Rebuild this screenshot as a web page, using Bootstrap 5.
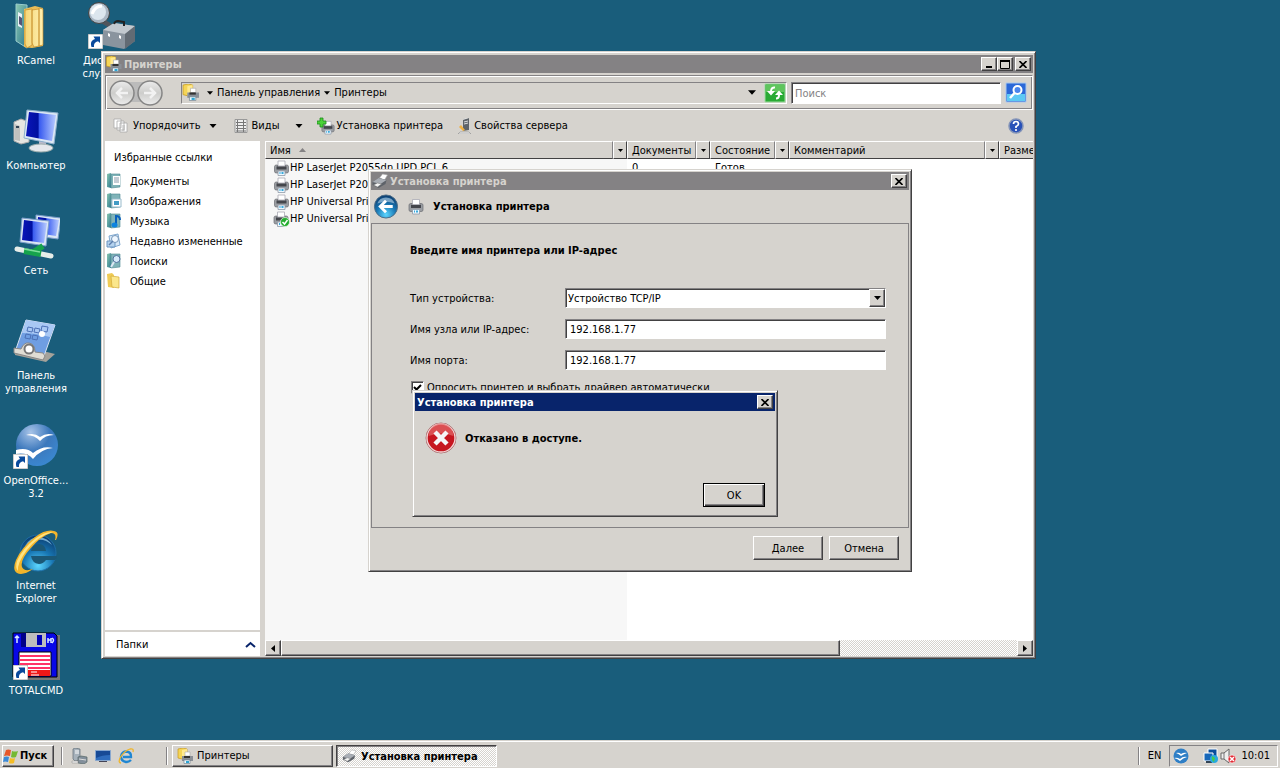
<!DOCTYPE html>
<html lang="ru">
<head>
    <meta charset="UTF-8">
    <meta name="viewport" content="width=device-width, initial-scale=1.0">
    <title>Установка принтера</title>
    <link href="https://cdn.jsdelivr.net/npm/bootstrap@5.3.0/dist/css/bootstrap.min.css" rel="stylesheet">
    <style>
        :root {
            --face: #d6d3ce;
            --shade: #848284;
            --dark: #424142;
        }
        body {
            background-color: #195d7b;
            color: #000;
            font-family: "DejaVu Sans Condensed", "DejaVu Sans", sans-serif;
            font-size: 11px;
            line-height: 13px;
        }
        svg {
            display: block;
            flex: none;
        }
        button, input, select {
            color: #000;
        }
        .face {
            background-color: var(--face);
        }

        /* desktop shortcuts */
        .shortcuts {
            align-content: flex-start;
            column-gap: 3px;
            min-height: 0;
        }
        .shortcut {
            width: 72px;
            height: 105px;
            color: #fff;
            text-decoration: none;
            white-space: nowrap;
            padding-top: 2px;
        }
        .shortcut svg {
            margin-bottom: 4px;
        }

        /* 3d edges */
        .raised {
            background-color: var(--face);
            border: 1px solid;
            border-color: #fff var(--dark) var(--dark) #fff;
            box-shadow: inset -1px -1px 0 var(--shade);
            border-radius: 0;
            padding: 0;
        }
        .sunken {
            background-color: #fff;
            border: 1px solid;
            border-color: var(--shade) #fff #fff var(--shade);
            box-shadow: inset 1px 1px 0 var(--dark);
        }
        .pane {
            background-color: var(--face);
            border: 1px solid;
            border-color: var(--face) var(--dark) var(--dark) var(--face);
            box-shadow: inset 1px 1px 0 #fff, inset -1px -1px 0 var(--shade);
        }
        .hatch {
            background: repeating-conic-gradient(#fff 0 25%, var(--face) 0 50%) 0 0 / 2px 2px;
        }

        .titlebar {
            background-color: var(--shade);
            color: var(--face);
            font-weight: bold;
            height: 18px;
            padding-right: 2px;
            gap: 2px;
        }
        .titlebar-active {
            background-color: #08246b;
            color: #fff;
            padding-left: 2px;
        }
        .sysbtn {
            width: 16px;
            height: 14px;
        }

        /* explorer */
        .explorer {
            left: 101px;
            top: 51px;
            right: 244px;
            bottom: 109px;
            padding: 3px 2px 2px 3px;
        }
        .navframe {
            height: 35px;
            border: 1px solid;
            border-color: var(--shade) #fff #fff var(--shade);
            box-shadow: inset 1px 1px 0 #fff, inset -1px -1px 0 var(--shade);
            padding: 0 5px 0 3px;
            margin-top: 2px;
        }
        .address {
            height: 22px;
            border: 1px solid;
            border-color: var(--shade) #fff #fff var(--shade);
            margin-left: 17px;
        }
        .address a {
            color: #000;
            text-decoration: none;
        }
        .plain {
            background: none;
            border: 0;
            padding: 0;
        }
        .search {
            width: 210px;
            height: 22px;
            padding: 2px 3px 0;
            border-radius: 0;
        }
        .search::placeholder {
            color: var(--shade);
        }
        .toolbar {
            height: 31px;
            padding: 0 9px 0 8px;
            gap: 14px;
        }
        .sidebar {
            width: 155px;
            background-color: #fff;
        }
        .sidebar h2 {
            font-size: 11px;
            line-height: 13px;
            font-weight: normal;
            margin: 10px 0 7px 9px;
        }
        .sidebar a {
            color: #000;
            text-decoration: none;
            height: 20px;
            gap: 8px;
            padding-left: 1px;
        }
        .folders {
            border-top: 2px solid var(--face);
            height: 26px;
            padding: 0 4px 0 11px;
        }
        .filelist {
            margin-left: 5px;
            background: linear-gradient(90deg, #f7f7f7 362px, #fff 362px);
        }
        .filelist table {
            width: 100%;
            table-layout: fixed;
            white-space: nowrap;
        }
        .filelist th {
            font-weight: normal;
            padding: 0;
            background-color: var(--face);
        }
        .filelist td {
            height: 17px;
            padding: 0 0 0 5px;
        }
        .filelist td:first-child {
            padding-left: 8px;
        }
        .headcell {
            height: 18px;
            border: 1px solid;
            border-color: #fff var(--shade) var(--dark) #fff;
            padding-left: 4px;
            overflow: hidden;
        }
        .headdrop {
            width: 14px;
            height: 18px;
            border: 1px solid;
            border-color: #fff var(--dark) var(--dark) #fff;
        }
        .scroll {
            height: 16px;
        }
        .scroll .raised {
            height: 16px;
        }
        .scroll .arrow {
            width: 16px;
        }
        .thumb {
            width: 76%;
        }

        /* wizard */
        .wizard {
            left: 368px;
            top: 169px;
            width: 544px;
            padding: 2px 2px 11px 2px;
        }
        .wizard-head {
            padding: 4px 2px;
            gap: 9px;
        }
        .wizard-body {
            border: 1px solid var(--shade);
            padding: 20px 22px 0 38px;
            height: 305px;
        }
        .wizard h1 {
            font-size: 11px;
            line-height: 13px;
            font-weight: bold;
            margin-bottom: 31px;
        }
        .field {
            height: 20px;
            margin-bottom: 11px;
        }
        .field label {
            width: 155px;
        }
        .field input {
            padding: 0 4px;
            border-radius: 0;
        }
        .field select {
            appearance: none;
            border: 0;
            background: none;
            padding: 0 2px;
        }
        .pollrow {
            gap: 3px;
            padding-left: 1px;
            line-height: 10px;
        }
        .tick {
            appearance: none;
            width: 13px;
            height: 13px;
            margin: 0;
        }
        .tick:checked {
            background: #fff url("data:image/svg+xml,%3Csvg xmlns='http://www.w3.org/2000/svg' viewBox='0 0 11 11'%3E%3Cpath d='M2 5l2.500 2.500L9 3' fill='none' stroke='%23000' stroke-width='2'/%3E%3C/svg%3E") center / 11px 11px no-repeat;
        }
        .wizard-foot {
            gap: 6px;
            padding: 8px 10px 0 0;
        }
        .pushbtn {
            width: 70px;
            height: 24px;
        }

        /* message box */
        .msgbox {
            left: 412px;
            top: 390px;
            width: 366px;
            height: 127px;
            padding: 2px 2px 9px;
        }
        .msg-text {
            padding: 11px 10px;
        }
        .ok-row {
            padding-right: 10px;
        }
        .okbtn {
            width: 62px;
            height: 24px;
            border: 1px solid #000;
            box-shadow: inset 1px 1px 0 #fff, inset -1px -1px 0 var(--dark), inset -2px -2px 0 var(--shade);
        }

        /* taskbar */
        .taskbar {
            height: 28px;
            border-top: 1px solid var(--face);
            box-shadow: inset 0 1px 0 #fff;
            padding: 3px 2px 1px;
        }
        .start-btn {
            width: 52px;
            height: 22px;
            margin-right: 7px;
        }
        .quick {
            gap: 7px;
            padding: 0 32px 0 8px;
        }
        .tasks {
            gap: 3px;
            padding-left: 4px;
        }
        .taskbtn {
            width: 161px;
            height: 22px;
        }
        .grip {
            width: 2px;
            height: 18px;
            border-left: 1px solid var(--shade);
            border-right: 1px solid #fff;
        }
        .pressed {
            border: 1px solid;
            border-color: var(--dark) #fff #fff var(--dark);
            box-shadow: inset 1px 1px 0 var(--shade);
            padding: 1px 0 0;
        }
        .tray {
            height: 22px;
            border: 1px solid;
            border-color: var(--shade) #fff #fff var(--shade);
            padding: 0 7px 0 2px;
        }
    </style>
</head>
<body class="vh-100 overflow-hidden d-flex flex-column position-relative">

    <!-- shared icons -->
    <svg width="0" height="0" class="position-absolute">
        <defs>
            <linearGradient id="gScreen" x1="0" y1="0" x2="1" y2="0">
                <stop offset="0" stop-color="#0a14b8"/><stop offset=".4" stop-color="#0010a0"/><stop offset=".45" stop-color="#3a5cf0"/><stop offset="1" stop-color="#b8ccff"/>
            </linearGradient>
            <radialGradient id="gBlue" cx=".5" cy=".85" r=".85">
                <stop offset="0" stop-color="#5cd6ff"/><stop offset=".5" stop-color="#1877b4"/><stop offset="1" stop-color="#0b3a6c"/>
            </radialGradient>
            <radialGradient id="gOffice" cx=".35" cy=".2" r=".9">
                <stop offset="0" stop-color="#a8c4e8"/><stop offset=".5" stop-color="#3c78bc"/><stop offset="1" stop-color="#3a8ad4"/>
            </radialGradient>
            <linearGradient id="gGrey" x1="0" y1="0" x2="0" y2="1">
                <stop offset="0" stop-color="#ececec"/><stop offset=".5" stop-color="#cdcdcb"/><stop offset="1" stop-color="#ececec"/>
            </linearGradient>
            <linearGradient id="gGold" x1="0" y1="0" x2="1" y2="0">
                <stop offset="0" stop-color="#f4d678"/><stop offset="1" stop-color="#fff0b0"/>
            </linearGradient>
            <linearGradient id="gTeal" x1="0" y1="0" x2="1" y2="1">
                <stop offset="0" stop-color="#8cc8b0"/><stop offset="1" stop-color="#2c7890"/>
            </linearGradient>
            <symbol id="shortcutArrow" viewBox="0 0 15 15">
                <path d="M0 0h15v15H0z" fill="#fff" stroke="#999"/>
                <path d="M3.500 13C2 8 4 6 7 5L5.500 2.500H12V9L10 7.200C7 8 5.500 10 6 13z" fill="#0a4a9c"/>
            </symbol>
            <symbol id="printer" viewBox="0 0 16 16">
                <path d="M4.500 1h7v5h-7z" fill="#fff" stroke="#a9aab4" stroke-width=".8"/>
                <path d="M1 6.500Q1 5 3 5h1v2h8V5h1q2 0 2 1.500v5Q15 13 13 13H3q-2 0-2-1.500z" fill="#9a9da2" stroke="#6b6d72" stroke-width=".7"/>
                <path d="M3 6.500h10v3H3z" fill="#44464c"/>
                <path d="M4.500 11h7v4.500h-7z" fill="#eef8ff" stroke="#8f9aa8" stroke-width=".8"/>
                <path d="M6 12h1v2H6zM8 12h2v2H8z" fill="#39a9dc"/>
            </symbol>
            <symbol id="printers" viewBox="0 0 16 16">
                <path d="M1 1l5-1 4 1v9l-5 1-4-1z" fill="#f5d557" stroke="#c79a1e" stroke-width=".7"/>
                <path d="M5 2l5-1v8l-5 2z" fill="#ffe98f"/>
                <path d="M8 4h5v4H8z" fill="#fff" stroke="#aaa" stroke-width=".6"/>
                <path d="M5 8h11v5H5z" fill="#8a8f96"/>
                <path d="M7 8h6v2H7z" fill="#333"/>
                <path d="M7 12h6v3.500H7z" fill="#e9faff" stroke="#678" stroke-width=".6"/>
                <path d="M9 13h3v2H9z" fill="#2ba3d2"/>
            </symbol>
            <symbol id="flatprinter" viewBox="0 0 16 16">
                <path d="M8 5l3-4 5 1-3 5z" fill="#fff" stroke="#aaa" stroke-width=".6"/>
                <path d="M1 9l6-4 8 2-1 4-7 4-6-3z" fill="#5d6269"/>
                <path d="M1 9l6-4 8 2-6 4z" fill="#a9aeb5"/>
                <path d="M2 12l4-2 4 1-4 3z" fill="#f4f4f4" stroke="#777" stroke-width=".5"/>
            </symbol>
            <symbol id="book" viewBox="0 0 16 16">
                <path d="M1 1l4-1v15l-4-1z" fill="url(#gTeal)"/>
                <path d="M5 1h9v13l-9 1z" fill="#7fb3b8" stroke="#4c8790" stroke-width=".6"/>
            </symbol>
            <symbol id="down" viewBox="0 0 7 4"><path d="M0 0h7L3.500 4z" fill="currentColor"/></symbol>
            <symbol id="cross" viewBox="0 0 8 7"><path d="M.5 0l7 7M7.500 0l-7 7" stroke="#000" stroke-width="1.600"/></symbol>
            <symbol id="ie" viewBox="0 0 48 48">
                <circle cx="26" cy="26" r="18" fill="url(#gBlue)" stroke="#1e6ea6"/>
                <path d="M19 24Q20 17 27 17Q33 17 34 24z" fill="#1b5876"/>
                <path d="M19 29H45Q45 31 43 33H34Q31 37 27 37Q20 36 19 29z" fill="#1b5876"/>
                <path d="M13 19Q18 10 27 10Q36 11 40 18Q33 12 26 13Q18 14 13 19z" fill="#9cd4f2" opacity=".7"/>
                <path d="M44 13Q48 5 42 4Q34 2 23 10Q9 21 4 33Q0 43 5 46Q11 49 21 42Q12 45 10 40Q8 33 18 22Q29 9 39 6Q45 6 43 13z" fill="#f3b52a"/>
                <path d="M41 5Q34 4 24 11Q10 22 5 34Q3 41 6 44Q5 36 15 23Q26 9 41 5z" fill="#ffe482"/>
            </symbol>
            <symbol id="iesmall" viewBox="0 0 16 16">
                <path d="M13 12Q11 14 8 14Q3 13 3 8.500Q4 3.500 8.500 3.500Q13.500 4 13 9H5" fill="none" stroke="#1f86d2" stroke-width="2.400"/>
                <path d="M15 4Q16 0 12 1Q6 3 2 10Q0 15 3 15" fill="none" stroke="#f0b62c" stroke-width="1.300"/>
            </symbol>
            <symbol id="office" viewBox="0 0 44 44">
                <circle cx="22" cy="22" r="21" fill="url(#gOffice)"/>
                <path d="M11 12Q19 9 25 14Q32 9 39 12Q30 12 25 18Q20 12 11 12z" fill="#fff"/>
                <path d="M1 27Q12 24 18 30Q28 22 38 25Q26 26 18 36Q12 29 1 31z" fill="#fff"/>
            </symbol>
            <symbol id="officesmall" viewBox="0 0 16 16">
                <circle cx="8" cy="8" r="7.500" fill="#2f7fc6"/>
                <path d="M3 5q3-1 5 1 3-2 6-1-3 1-6 3-2-2-5-3zM1 10q3-1 6 1 3-3 7-2-4 1-7 4-2-2-6-3z" fill="#fff"/>
            </symbol>
        </defs>
    </svg>

    <main class="shortcuts flex-grow-1 d-flex flex-column flex-wrap">
        <a href="#" class="shortcut d-flex flex-column align-items-center text-center">
            <svg width="48" height="48" viewBox="0 0 48 48">
                <path d="M4 2l11 1v43L4 39z" fill="url(#gTeal)" stroke="#9cc"/>
                <path d="M6 10l4 2v14l-4-2z" fill="#e9f2f8"/>
                <path d="M7 14l3 2v8l-3-2z" fill="#557"/>
                <path d="M12 7l11-3 8 2v38l-11 2-8-1z" fill="#e9bd58"/>
                <path d="M13 8l7-1v36l-5 3-2-4zM20 8l7-1v37l-5 1-2-4zM27 6l4 1v36l-4 1z" fill="url(#gGold)" stroke="#c58d28" stroke-width=".7"/>
            </svg>
            <span>RCamel</span>
        </a>
        <a href="#" class="shortcut d-flex flex-column align-items-center text-center">
            <svg width="48" height="48" viewBox="0 0 48 48">
                <path d="M2 15l7-3 8 3v20l-8 2-7-3z" fill="#e6e6e2" stroke="#aaa"/>
                <path d="M3 17l5 2v15l-5-1z" fill="#bfc1bf"/><path d="M4 19h3v2H4z" fill="#345"/>
                <path d="M27 34l7 1 1 7h-8z" fill="#bbc"/>
                <ellipse cx="29" cy="41" rx="12" ry="4" fill="#e5e8ec" stroke="#9aa"/>
                <path d="M15 3l31 3-4 31-30-6z" fill="#dce8f4" stroke="#8fb0cc"/>
                <path d="M17 5l27 3-4 26-26-5z" fill="url(#gScreen)"/>
            </svg>
            <span>Компьютер</span>
        </a>
        <a href="#" class="shortcut d-flex flex-column align-items-center text-center">
            <svg width="48" height="48" viewBox="0 0 48 48">
                <path d="M24 3l25 3-3 21-22-3z" fill="#dbe6f4" stroke="#7b9dca"/>
                <path d="M26 5l21 3-3 16-19-3z" fill="url(#gScreen)"/>
                <path d="M10 6l27 3-3 25-26-4z" fill="#dbe6f4" stroke="#7b9dca"/>
                <path d="M12 8l23 3-3 20-22-3z" fill="url(#gScreen)"/>
                <path d="M5 37l34 7" stroke="#e6ede9" stroke-width="5" stroke-linecap="round"/>
                <path d="M12 39l17 3M20 41l11-7" stroke="#16a34c" stroke-width="6"/>
                <path d="M12 37l16 3" stroke="#7ee09b" stroke-width="1.500"/>
            </svg>
            <span>Сеть</span>
        </a>
        <a href="#" class="shortcut d-flex flex-column align-items-center text-center">
            <svg width="48" height="48" viewBox="0 0 48 48">
                <path d="M3 36l32-1 8 2-9 8-31-7z" fill="#a5a29a"/>
                <path d="M14 3l29 5-11 31-28-7z" fill="#6f9ee2" stroke="#d8e3f2"/>
                <path d="M14 3l29 5-5 12q-15-4-28-4z" fill="#a9c8f4"/>
                <path d="M16 10l5 1-1 4-5-1zM23 11l5 1-1 4-5-1zM30 9l6 1-1 5-6-1zM14 17l5 1-1 4-5-1zM21 18l5 1-1 4-5-1z" fill="none" stroke="#4c70b6"/>
                <circle cx="30" cy="17" r="3" fill="#fff"/>
                <path d="M2 31l7 1q3-7 8-6 6 1 6 9l8 1 2 3-2 4-29-7z" fill="#e0ddd4" stroke="#888"/>
                <circle cx="17" cy="32" r="4.500" fill="#fff" stroke="#777" stroke-width="2"/>
            </svg>
            <span>Панель<br>управления</span>
        </a>
        <a href="#" class="shortcut d-flex flex-column align-items-center text-center">
            <svg width="48" height="48" viewBox="0 0 48 48">
                <use href="#office" x="3" y="1" width="44" height="44"/>
                <use href="#shortcutArrow" x="1" y="32" width="15" height="15"/>
            </svg>
            <span>OpenOffice...<br>3.2</span>
        </a>
        <a href="#" class="shortcut d-flex flex-column align-items-center text-center">
            <svg width="48" height="48" viewBox="0 0 48 48"><use href="#ie"/></svg>
            <span>Internet<br>Explorer</span>
        </a>
        <a href="#" class="shortcut d-flex flex-column align-items-center text-center">
            <svg width="48" height="48" viewBox="0 0 48 48">
                <path d="M5 3h43v45H5z" fill="#777"/>
                <path d="M1 1h41l3 3v41H1z" fill="#0808e8" stroke="#000"/>
                <path d="M14 1h20v14H14z" fill="#bdbdbd"/><path d="M9 1h5v14H9z" fill="#000088"/>
                <path d="M25 3h5v10h-5z" fill="#0000b8"/>
                <path d="M5 4v7M3 6l2-2 2 2M36 6v5M39 6v5M36 8h3M40 6q3 2 0 5" stroke="#d8e8ff" stroke-width="1.500" fill="none"/>
                <path d="M7 20h32v24H7z" fill="#fff" stroke="#000"/>
                <path d="M8 24h30M8 28h30M8 32h30M8 36h30" stroke="#f36" stroke-width="2"/>
                <path d="M8 38h30v6H8z" fill="#f01818"/><path d="M19 40h6M19 43h8" stroke="#fff"/>
                <use href="#shortcutArrow" x="1" y="33" width="15" height="15"/>
            </svg>
            <span>TOTALCMD</span>
        </a>
        <a href="#" class="shortcut d-flex flex-column align-items-center text-center">
            <svg width="48" height="48" viewBox="0 0 48 48">
                <path d="M14 15l14 9-2 4-14-8z" fill="#50555c"/>
                <circle cx="12" cy="11" r="10.500" fill="#aab6c3" stroke="#444"/>
                <circle cx="11" cy="10" r="8" fill="#dce6ee"/>
                <path d="M5 12q3-8 10-8" stroke="#fff" stroke-width="3" fill="none"/>
                <path d="M16 28l11-7 21 3v15l-11 8-21-4z" fill="#8a949e"/>
                <path d="M16 28l11-7 21 3-10 8z" fill="#c2c9cf"/>
                <path d="M38 32l10-8v15l-10 8z" fill="#626b74"/>
                <path d="M27 22q1-3 4-3l6 1v4" fill="none" stroke="#222" stroke-width="2"/>
                <path d="M21 31l2 1v3l-2-1zM32 33l2 1v3l-2-1z" fill="#fff"/>
                <use href="#shortcutArrow" x="1" y="32" width="15" height="15"/>
            </svg>
            <span>Диспетчер<br>служб те...</span>
        </a>
    </main>

    <!-- explorer window -->
    <section class="explorer pane position-absolute d-flex flex-column">
        <header class="titlebar d-flex align-items-center">
            <svg width="17" height="16"><use href="#printers"/></svg>
            <span class="flex-grow-1">Принтеры</span>
            <div class="d-flex">
                <button class="sysbtn raised d-flex align-items-end justify-content-center" aria-label="Свернуть">
                    <svg width="6" height="4"><path d="M0 0h6v2H0z"/></svg>
                </button>
                <button class="sysbtn raised d-flex align-items-center justify-content-center" aria-label="Развернуть">
                    <svg width="10" height="9"><path d="M.5 1h9v7.500h-9z" fill="none" stroke="#000"/><path d="M0 0h10v2H0z"/></svg>
                </button>
            </div>
            <button class="sysbtn raised d-flex align-items-center justify-content-center" aria-label="Закрыть">
                <svg width="8" height="7"><use href="#cross"/></svg>
            </button>
        </header>

        <nav class="navframe d-flex align-items-center flex-shrink-0">
            <svg width="55" height="28" viewBox="0 0 55 28">
                <path d="M13 3h28v20H13z" fill="#bbb"/>
                <g fill="url(#gGrey)" stroke="#858585" stroke-width="1.500">
                    <circle cx="13" cy="14" r="12"/><circle cx="41" cy="14" r="12"/>
                </g>
                <path d="M19 14H8M13 9l-5 5 5 5M35 14h11M41 9l5 5-5 5" fill="none" stroke="#f2f2f2" stroke-width="2.500"/>
            </svg>
            <div class="address flex-grow-1 d-flex align-items-center">
                <svg width="17" height="17" class="me-2"><use href="#printers"/></svg>
                <svg width="6" height="4" class="me-1"><use href="#down"/></svg>
                <a href="#">Панель управления</a>
                <svg width="6" height="4" class="mx-1"><use href="#down"/></svg>
                <a href="#">Принтеры</a>
                <svg width="8" height="5" class="ms-auto me-2"><use href="#down"/></svg>
                <button class="plain" aria-label="Обновить">
                    <svg width="22" height="20" viewBox="0 0 22 20">
                        <path d="M1 1h20v18H1z" fill="#29aa34" stroke="#a0dca0"/>
                        <path d="M2 2h18v7H2z" fill="#5fc55c"/>
                        <path d="M11 4.500Q7.500 4 7 8M15 12Q15 15.500 12 15.500" fill="none" stroke="#fff" stroke-width="2"/>
                        <path d="M3 8h8l-4 4.500zM11 12h8l-4-4.500z" fill="#fff"/>
                    </svg>
                </button>
            </div>
            <input type="search" class="search sunken ms-1" placeholder="Поиск" aria-label="Поиск">
            <button class="plain ms-1" aria-label="Найти">
                <svg width="22" height="21" viewBox="0 0 22 21">
                    <path d="M1 1h20v19H1z" fill="#2b68d8" stroke="#a9c8ee"/>
                    <path d="M2 12h18v7H2z" fill="#5dc9f4"/>
                    <circle cx="12.500" cy="8" r="4" fill="#4a86ec" stroke="#fff" stroke-width="2"/>
                    <path d="M9.500 11L5 16" stroke="#fff" stroke-width="2.500"/>
                </svg>
            </button>
        </nav>

        <div class="toolbar d-flex align-items-center flex-shrink-0">
            <button class="plain d-flex align-items-center">
                <svg width="20" height="16" viewBox="0 0 20 16" fill="#fff" stroke="#aaa" stroke-width=".8">
                    <path d="M1 1h7v9H1zM4 3h7v9H4zM7 5h7v9H7z"/><path d="M9 8h3M9 10h3M9 12h3"/>
                </svg>
                Упорядочить
                <svg width="8" height="4" class="ms-2"><use href="#down"/></svg>
            </button>
            <button class="plain d-flex align-items-center">
                <svg width="21" height="16" viewBox="-1 0 21 16" fill="none" stroke="#777">
                    <path d="M3 1.500h12v13H3z" fill="#eee" stroke="#999"/><path d="M4 4.500h10M4 7.500h10M4 10.500h10M4 13h10M5.500 2v12M11.500 2v12"/>
                </svg>
                Виды
                <svg width="8" height="4" class="ms-3"><use href="#down"/></svg>
            </button>
            <button class="plain d-flex align-items-center">
                <svg width="19" height="18" viewBox="0 0 19 18">
                    <use href="#printer" x="4" y="3" width="14" height="15"/>
                    <path d="M3 1h3v3h3v3H6v3H3V7H0V4h3z" fill="#4bd238" stroke="#1c8a1c" stroke-width=".8"/>
                </svg>
                Установка принтера
            </button>
            <button class="plain d-flex align-items-center">
                <svg width="17" height="16" viewBox="0 0 17 16">
                    <path d="M6 1l6-1v12l-6 1z" fill="#5e6368"/><path d="M6 1l2-1h4L6 2z" fill="#ddd"/>
                    <path d="M7 4l4-1M7 6l4-1" stroke="#ddd"/>
                    <path d="M3 14h9l2 2H1z" fill="#ededed" stroke="#888" stroke-width=".6"/>
                    <path d="M2 9l2-2 4 5-2 1z" fill="#f0b040"/>
                </svg>
                Свойства сервера
            </button>
            <button class="plain ms-auto" aria-label="Справка">
                <svg width="16" height="16" viewBox="0 0 16 16">
                    <circle cx="8" cy="8" r="7" fill="#2851b8" stroke="#8494b8" stroke-width="1.500"/>
                    <path d="M5.500 6Q5.500 3.500 8 3.500T10.500 6Q10.500 7.500 8 8.500V10" fill="none" stroke="#fff" stroke-width="1.700"/>
                    <circle cx="8" cy="12" r="1.100" fill="#fff"/>
                </svg>
            </button>
        </div>

        <div class="flex-grow-1 d-flex overflow-hidden">
            <aside class="sidebar d-flex flex-column flex-shrink-0">
                <h2>Избранные ссылки</h2>
                <a href="#" class="d-flex align-items-center">
                    <svg width="16" height="16"><use href="#book"/><path d="M7 3h7v9H7z" fill="#fff"/><path d="M8 5h5M8 7h5M8 9h5" stroke="#89a"/></svg>
                    Документы
                </a>
                <a href="#" class="d-flex align-items-center">
                    <svg width="16" height="16"><use href="#book"/><path d="M6 6h9v8H6z" fill="#fff" stroke="#9bc"/><path d="M8 8h5v4H8z" fill="#429bc5"/></svg>
                    Изображения
                </a>
                <a href="#" class="d-flex align-items-center">
                    <svg width="16" height="16"><use href="#book"/><path d="M10 12V3q4 0 4 4" fill="none" stroke="#0860bd" stroke-width="2"/><ellipse cx="8.500" cy="12" rx="3" ry="2.500" fill="#0d84df"/></svg>
                    Музыка
                </a>
                <a href="#" class="d-flex align-items-center">
                    <svg width="16" height="16"><path d="M3 3l9-2 2 11-9 3z" fill="#d7e8f8" stroke="#7fa8d0"/><path d="M1 8h8v6H1z" fill="#b4d2ee" stroke="#6a94c0"/><circle cx="9" cy="6" r="3.500" fill="#eff7ff" stroke="#7696b8"/><path d="M7 8l-4 4" stroke="#5c7ead" stroke-width="1.500"/></svg>
                    Недавно измененные
                </a>
                <a href="#" class="d-flex align-items-center">
                    <svg width="16" height="16"><use href="#book"/><circle cx="10.500" cy="6" r="3.500" fill="#d5eafa" stroke="#51719c"/><path d="M8 9l-3 5" stroke="#dde9f4" stroke-width="2"/></svg>
                    Поиски
                </a>
                <a href="#" class="d-flex align-items-center">
                    <svg width="16" height="16"><path d="M1 1l5-1 2 2v13l-6-1z" fill="#efcb55"/><path d="M5 3l8 1v11l-7-1z" fill="#fbe78c" stroke="#d3aa3b" stroke-width=".7"/></svg>
                    Общие
                </a>
                <div class="folders mt-auto d-flex align-items-center justify-content-between">
                    Папки
                    <svg width="11" height="7" fill="none" stroke="#08246b" stroke-width="2"><path d="M1 6l4.500-4L10 6"/></svg>
                </div>
            </aside>

            <div class="filelist flex-grow-1 d-flex flex-column overflow-hidden">
                <table>
                    <colgroup>
                        <col style="width: 362px"><col style="width: 83px"><col style="width: 79px"><col style="width: 210px"><col>
                    </colgroup>
                    <thead>
                        <tr>
                            <th><div class="d-flex"><span class="headcell flex-grow-1 d-flex align-items-center">Имя <svg width="7" height="4" class="ms-2"><path d="M0 4h7L3.500 0z" fill="#848284"/></svg></span><span class="headdrop d-flex align-items-center justify-content-center"><svg width="5" height="3"><use href="#down"/></svg></span></div></th>
                            <th><div class="d-flex"><span class="headcell flex-grow-1 d-flex align-items-center">Документы</span><span class="headdrop d-flex align-items-center justify-content-center"><svg width="5" height="3"><use href="#down"/></svg></span></div></th>
                            <th><div class="d-flex"><span class="headcell flex-grow-1 d-flex align-items-center">Состояние</span><span class="headdrop d-flex align-items-center justify-content-center"><svg width="5" height="3"><use href="#down"/></svg></span></div></th>
                            <th><div class="d-flex"><span class="headcell flex-grow-1 d-flex align-items-center">Комментарий</span><span class="headdrop d-flex align-items-center justify-content-center"><svg width="5" height="3"><use href="#down"/></svg></span></div></th>
                            <th><div class="headcell border-end-0 d-flex align-items-center">Разме</div></th>
                        </tr>
                    </thead>
                    <tbody>
                        <tr>
                            <td><div class="d-flex align-items-center"><svg width="17" height="16"><use href="#printer"/></svg>HP LaserJet P2055dn UPD PCL 6</div></td>
                            <td>0</td><td>Готов</td><td></td><td></td>
                        </tr>
                        <tr>
                            <td><div class="d-flex align-items-center"><svg width="17" height="16"><use href="#printer"/></svg>HP LaserJet P2055dn</div></td>
                            <td></td><td></td><td></td><td></td>
                        </tr>
                        <tr>
                            <td><div class="d-flex align-items-center"><svg width="17" height="16"><use href="#printer"/></svg>HP Universal Printing</div></td>
                            <td></td><td></td><td></td><td></td>
                        </tr>
                        <tr>
                            <td><div class="d-flex align-items-center"><svg width="17" height="16" viewBox="0 0 17 16"><use href="#printer" width="16" height="16"/><circle cx="12" cy="11" r="4.500" fill="#25ad2f" stroke="#eafaea" stroke-width=".7"/><path d="M9.500 11l2 2 3-4" fill="none" stroke="#fff" stroke-width="1.500"/></svg>HP Universal Printing</div></td>
                            <td></td><td></td><td></td><td></td>
                        </tr>
                    </tbody>
                </table>
                <div class="scroll hatch mt-auto d-flex">
                    <button class="raised arrow d-flex align-items-center justify-content-center" aria-label="Влево"><svg width="4" height="7"><path d="M4 0v7L0 3.500z"/></svg></button>
                    <div class="flex-grow-1"><div class="raised thumb"></div></div>
                    <button class="raised arrow d-flex align-items-center justify-content-center" aria-label="Вправо"><svg width="4" height="7"><path d="M0 0v7l4-3.500z"/></svg></button>
                </div>
            </div>
        </div>
    </section>

    <!-- printer wizard -->
    <form class="wizard pane position-absolute">
        <header class="titlebar d-flex align-items-center">
            <svg width="17" height="16"><use href="#flatprinter"/></svg>
            <span class="flex-grow-1">Установка принтера</span>
            <button type="button" class="sysbtn raised d-flex align-items-center justify-content-center" aria-label="Закрыть">
                <svg width="8" height="7"><use href="#cross"/></svg>
            </button>
        </header>
        <div class="wizard-head d-flex align-items-center fw-bold">
            <button type="button" class="plain" aria-label="Назад">
                <svg width="26" height="25" viewBox="0 0 26 26">
                    <circle cx="13" cy="13" r="12" fill="url(#gBlue)" stroke="#4d6c85"/>
                    <path d="M4 10a9.500 9.500 0 0118 0q-9-4-18 0z" fill="#a3c3dc" opacity=".7"/>
                    <path d="M20 13H8M13 7l-6 6 6 6" fill="none" stroke="#fff" stroke-width="3"/>
                </svg>
            </button>
            <svg width="16" height="17"><use href="#printer"/></svg>
            Установка принтера
        </div>
        <div class="wizard-body">
            <h1>Введите имя принтера или IP-адрес</h1>
            <div class="field d-flex align-items-center">
                <label for="deviceType">Тип устройства:</label>
                <div class="sunken flex-grow-1 h-100 d-flex">
                    <select id="deviceType" class="flex-grow-1">
                        <option>Устройство TCP/IP</option>
                    </select>
                    <span class="raised sysbtn h-100 d-flex align-items-center justify-content-center"><svg width="7" height="4"><use href="#down"/></svg></span>
                </div>
            </div>
            <div class="field d-flex align-items-center">
                <label for="host">Имя узла или IP-адрес:</label>
                <input type="text" id="host" class="sunken flex-grow-1 h-100" value="192.168.1.77">
            </div>
            <div class="field d-flex align-items-center">
                <label for="port">Имя порта:</label>
                <input type="text" id="port" class="sunken flex-grow-1 h-100" value="192.168.1.77">
            </div>
            <div class="pollrow d-flex align-items-center">
                <input type="checkbox" id="poll" class="tick sunken" checked>
                <label for="poll">Опросить принтер и выбрать драйвер автоматически</label>
            </div>
        </div>
        <div class="wizard-foot d-flex justify-content-end">
            <button type="button" class="pushbtn raised">Далее</button>
            <button type="button" class="pushbtn raised">Отмена</button>
        </div>
    </form>

    <!-- error message -->
    <div class="msgbox pane position-absolute d-flex flex-column" role="alertdialog" aria-labelledby="msgTitle">
        <header class="titlebar titlebar-active d-flex align-items-center flex-shrink-0">
            <span id="msgTitle" class="flex-grow-1">Установка принтера</span>
            <button class="sysbtn raised d-flex align-items-center justify-content-center" aria-label="Закрыть">
                <svg width="8" height="7"><use href="#cross"/></svg>
            </button>
        </header>
        <div class="msg-text d-flex align-items-center fw-bold gap-2">
            <svg width="32" height="32" viewBox="0 0 32 32">
                <circle cx="16" cy="16" r="15" fill="#c61620" stroke="#a77"/>
                <circle cx="16" cy="16" r="14" fill="none" stroke="#f3dada" stroke-width="1.300"/>
                <path d="M3.500 14a12.500 12.500 0 0125 0q-12-5-25 0z" fill="#e46a6a" opacity=".7"/>
                <path d="M10 10l12 12M22 10L10 22" stroke="#f5f5f7" stroke-width="4.500"/>
            </svg>
            Отказано в доступе.
        </div>
        <div class="ok-row d-flex justify-content-end mt-auto">
            <button class="okbtn face">OK</button>
        </div>
    </div>

    <footer class="taskbar face d-flex align-items-center flex-shrink-0">
        <button class="raised start-btn d-flex align-items-center fw-bold">
            <svg width="17" height="16" viewBox="0 0 17 16">
                <path d="M3 2q2-1 5 0L7 8Q4 7 1 8z" fill="#e8582a"/><path d="M9 3q3 1 6 0l-2 6q-3 1-5 0z" fill="#75b933"/>
                <path d="M1 9q3-1 5 0l-1 5q-3-1-5 0z" fill="#3b8ad8"/><path d="M7 10q3 1 5 0l-1 5q-3 1-5 0z" fill="#f5bd25"/>
            </svg>
            Пуск
        </button>
        <span class="grip"></span>
        <div class="quick d-flex align-items-center">
            <svg width="17" height="16" viewBox="0 0 17 16">
                <path d="M4 0l5 1v11l-5 1-2-2V1z" fill="#a6b1bb" stroke="#5f6b76" stroke-width=".7"/><path d="M4 3h4M4 5h4" stroke="#fff"/>
                <path d="M7 9l3-1 6 1v5l-3 2-6-1z" fill="#838f9b" stroke="#566" stroke-width=".7"/><path d="M8 11l7 1" stroke="#ddd"/>
                <path d="M1 13h6v2H1z" fill="#eee" stroke="#888" stroke-width=".5"/>
            </svg>
            <svg width="16" height="14" viewBox="0 0 16 14"><path d="M.5 1.500h15v10H.5z" fill="#2e6cbd" stroke="#88a7ce"/><path d="M1 2h14v4q-8 0-14 3z" fill="#174a96"/><path d="M4 12h8v1H4z" fill="#445"/></svg>
            <svg width="16" height="16"><use href="#iesmall"/></svg>
        </div>
        <span class="grip"></span>
        <div class="tasks d-flex">
            <button class="raised taskbtn d-flex align-items-center">
                <svg width="16" height="16" class="mx-1"><use href="#printers"/></svg>Принтеры
            </button>
            <button class="pressed hatch taskbtn d-flex align-items-center fw-bold">
                <svg width="16" height="14" class="mx-1"><use href="#flatprinter"/></svg>Установка принтера
            </button>
        </div>
        <span class="grip ms-auto me-2"></span>
        <span class="me-2">EN</span>
        <div class="tray d-flex align-items-center">
            <svg width="18" height="16" class="me-2"><use href="#officesmall"/></svg>
            <svg width="18" height="16" viewBox="0 0 18 16" class="ms-1">
                <path d="M6 1h9v8H6z" fill="#0a4d9c" stroke="#fff"/><path d="M2 5h9v8H2z" fill="#1767b8" stroke="#fff"/>
                <path d="M4 14h6" stroke="#345" stroke-width="2"/><circle cx="12" cy="11" r="4" fill="#29a8e0"/><path d="M10 8l3 2-1 4q-3-2-2-6z" fill="#48c94a"/>
            </svg>
            <svg width="17" height="16" viewBox="0 0 17 16" class="me-1">
                <path d="M1 5h3l5-4v14l-5-4H1z" fill="#eee" stroke="#666"/><path d="M4 5v6" stroke="#777"/>
                <circle cx="12" cy="11" r="4" fill="#e22b35" stroke="#fff" stroke-width=".6"/><path d="M10 9l4 4M14 9l-4 4" stroke="#fff" stroke-width="1.500"/>
            </svg>
            10:01
        </div>
    </footer>

    <script src="https://cdn.jsdelivr.net/npm/bootstrap@5.3.0/dist/js/bootstrap.bundle.min.js"></script>
</body>
</html>
